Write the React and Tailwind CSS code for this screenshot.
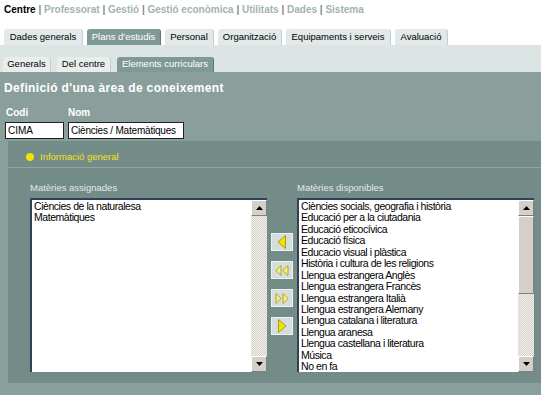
import React from "react";

const navItems = ["Professorat", "Gestió", "Gestió econòmica", "Utilitats", "Dades", "Sistema"];

const tabs = [
  { label: "Dades generals", w: "w-[79px]" },
  { label: "Plans d'estudis", w: "w-[74px]", active: true },
  { label: "Personal", w: "w-[49px]" },
  { label: "Organització", w: "w-[64px]" },
  { label: "Equipaments i serveis", w: "w-[105px]" },
  { label: "Avaluació", w: "w-[53px]" },
];

const subTabs = [
  { label: "Generals", w: "w-[48px]" },
  { label: "Del centre", w: "w-[54px]" },
  { label: "Elements curriculars", w: "w-[97px]", active: true },
];

const assigned = ["Ciències de la naturalesa", "Matemàtiques"];
const available = [
  "Ciències socials, geografia i història",
  "Educació per a la ciutadania",
  "Educació eticocívica",
  "Educació física",
  "Educacio visual i plàstica",
  "Història i cultura de les religions",
  "Llengua estrangera Anglès",
  "Llengua estrangera Francès",
  "Llengua estrangera Italià",
  "Llengua estrangera Alemany",
  "Llengua catalana i literatura",
  "Llengua aranesa",
  "Llengua castellana i literatura",
  "Música",
  "No en fa",
];

function ArrowBtn({ dir }) {
  return (
    <div className="w-[16px] h-[16px] bg-[#d4d0c8] border border-t-[#ffffff] border-l-[#ffffff] border-b-[#808080] border-r-[#808080] flex items-center justify-center">
      <svg width="7" height="4" viewBox="0 0 7 4">
        {dir === "up" ? <polygon points="3.5,0 7,4 0,4" fill="#000" /> : <polygon points="0,0 7,0 3.5,4" fill="#000" />}
      </svg>
    </div>
  );
}

function Track({ className }) {
  return (
    <div
      className={
        "bg-[repeating-conic-gradient(#d4d0c8_0%_25%,#f4f3ef_0%_50%)] [background-size:2px_2px] " + (className || "")
      }
    />
  );
}

function ListBox({ items, thumb }) {
  return (
    <div className="w-[237px] h-[174px] flex bg-white border-t-2 border-l-2 border-t-[#34405a] border-l-[#34405a]">
      <div className="flex-1 pl-[2px] pt-[1px] text-[10.5px] tracking-[-0.45px] leading-[11.43px] text-black overflow-hidden whitespace-nowrap">
        {items.map((t) => (
          <div key={t}>{t}</div>
        ))}
      </div>
      <div className="w-[16px] flex flex-col">
        <ArrowBtn dir="up" />
        {thumb ? (
          <>
            <div className="h-[78px] bg-[#d4d0c8] border border-t-[#ffffff] border-l-[#ffffff] border-b-[#808080] border-r-[#808080]" />
            <Track className="flex-1" />
          </>
        ) : (
          <Track className="flex-1" />
        )}
        <ArrowBtn dir="down" />
      </div>
    </div>
  );
}

function MoveBtn({ kind }) {
  return (
    <div className="w-[22px] h-[18px] bg-[#d6dedd] border border-[#eef2f1] flex items-center justify-center">
      {kind === "left" && (
        <svg width="10" height="14" viewBox="0 0 10 14">
          <polygon points="8.5,0.5 8.5,13.5 1,7" fill="#f2e200" stroke="#a89e10" strokeWidth="1" />
        </svg>
      )}
      {kind === "right" && (
        <svg width="10" height="14" viewBox="0 0 10 14">
          <polygon points="1.5,0.5 1.5,13.5 9,7" fill="#f2e200" stroke="#a89e10" strokeWidth="1" />
        </svg>
      )}
      {kind === "left2" && (
        <svg width="14" height="11" viewBox="0 0 14 11">
          <polygon points="6,0.5 6,10.5 0.8,5.5" fill="#f4ee90" stroke="#b0a418" strokeWidth="1" />
          <polygon points="13,0.5 13,10.5 7.8,5.5" fill="#f4ee90" stroke="#b0a418" strokeWidth="1" />
        </svg>
      )}
      {kind === "right2" && (
        <svg width="14" height="11" viewBox="0 0 14 11">
          <polygon points="1,0.5 1,10.5 6.2,5.5" fill="#f4ee90" stroke="#b0a418" strokeWidth="1" />
          <polygon points="8,0.5 8,10.5 13.2,5.5" fill="#f4ee90" stroke="#b0a418" strokeWidth="1" />
        </svg>
      )}
    </div>
  );
}

export default function App() {
  return (
    <div className="w-[541px] h-[395px] overflow-hidden bg-white font-['Liberation_Sans',Arial,sans-serif] flex flex-col">
      {/* Top nav */}
      <div className="h-[29px] pl-[4px] pt-[4px] text-[10px] leading-[12px] font-bold whitespace-nowrap">
        <span className="text-black">Centre</span>
        {navItems.map((n) => (
          <span key={n}>
            <span className="text-[#7d8b89]"> | </span>
            <span className="text-[#a3b3b0]">{n}</span>
          </span>
        ))}
      </div>

      {/* Main tabs */}
      <div className="h-[16px] flex gap-[4px] pl-[4px]">
        {tabs.map((t) => (
          <div
            key={t.label}
            className={
              t.w +
              " h-[16px] rounded-t-[3px] flex items-center justify-center text-[9.5px] whitespace-nowrap " +
              (t.active
                ? "bg-[#7f9a96] text-white border-r border-[#5f7673]"
                : "bg-[#e2e9e8] text-black border-r border-[#c4cecc]")
            }
          >
            {t.label}
          </div>
        ))}
      </div>

      {/* Sub tab band */}
      <div className="h-[27px] bg-[#dde5e4] flex items-end gap-[6px] pl-[3px]">
        {subTabs.map((t) => (
          <div
            key={t.label}
            className={
              t.w +
              " h-[15px] rounded-t-[3px] flex items-center justify-center text-[9.5px] whitespace-nowrap " +
              (t.active
                ? "bg-[#7f9a96] text-white border-r border-[#5f7673]"
                : "bg-[#e9eeed] text-black border-r border-[#c4cecc]")
            }
          >
            {t.label}
          </div>
        ))}
      </div>

      {/* Content */}
      <div className="flex-1 bg-[#8a9f9b] flex flex-col">
        <div className="pl-[4px] pt-[9px] text-[12px] leading-[14px] font-bold text-white tracking-[0.35px]">
          Definició d'una àrea de coneixement
        </div>

        <div className="mt-[12px] flex text-[10px] leading-[11px] font-bold text-white">
          <div className="pl-[6px] w-[68px]">Codi</div>
          <div>Nom</div>
        </div>

        <div className="mt-[4px] flex gap-[4px] pl-[5px]">
          <div className="w-[59px] h-[17px] bg-white border border-[#222] text-[10px] leading-[15px] pl-[2px] text-black">
            CIMA
          </div>
          <div className="w-[116px] h-[17px] bg-white border border-[#222] text-[10px] leading-[15px] pl-[2px] text-black whitespace-nowrap tracking-[-0.2px]">
            Ciències / Matemàtiques
          </div>
        </div>

        {/* Panel */}
        <div className="mt-[2px] ml-[8px] h-[242px] bg-[#748c88] flex flex-col">
          <div className="h-[27px] border-b border-[#90a5a1] flex items-start pt-[10px] pl-[18px] gap-[6px]">
            <div className="w-[8px] h-[8px] mt-[2px] rounded-full bg-[#f5e100]" />
            <div className="text-[9.5px] leading-[12px] text-[#f2e21a]">Informació general</div>
          </div>

          <div className="flex pl-[22px] gap-[4px] mt-[14px]">
            <div className="flex flex-col">
              <div className="text-[9.5px] leading-[11px] text-[#e3e9e8] h-[16px]">Matèries assignades</div>
              <ListBox items={assigned} />
            </div>
            <div className="flex flex-col gap-[10px] pt-[51px]">
              <MoveBtn kind="left" />
              <MoveBtn kind="left2" />
              <MoveBtn kind="right2" />
              <MoveBtn kind="right" />
            </div>
            <div className="flex flex-col">
              <div className="text-[9.5px] leading-[11px] text-[#e3e9e8] h-[16px]">Matèries disponibles</div>
              <ListBox items={available} thumb />
            </div>
          </div>
        </div>
      </div>
    </div>
  );
}
